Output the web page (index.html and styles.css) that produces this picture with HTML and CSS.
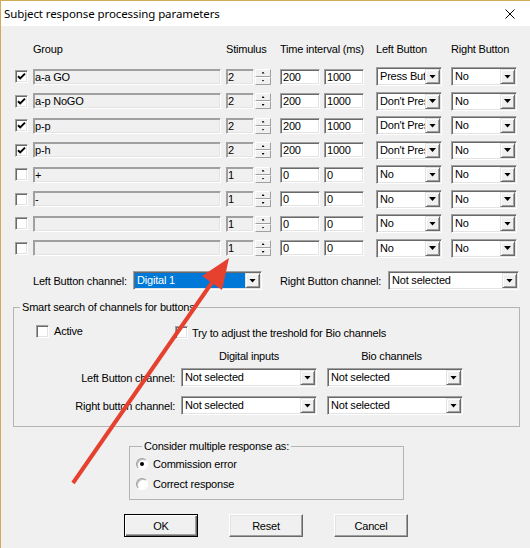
FILE: index.html
```html
<!DOCTYPE html>
<html>
<head>
<meta charset="utf-8">
<title>Subject response processing parameters</title>
<link rel="stylesheet" href="styles.css">
</head>
<body>
<div class="win">
  <div class="titlebar">
    <span class="title">Subject response processing parameters</span>
    <svg class="close" width="10" height="10" viewBox="0 0 10 10"><path d="M0.5 0.5L9.5 9.5M9.5 0.5L0.5 9.5" stroke="#000" stroke-width="1" fill="none"/></svg>
  </div>
  <div class="client">
    <div class="grid">
      <span></span><span class="hd">Group</span><span class="hd">Stimulus</span><span></span><span class="hd span2">Time interval (ms)</span><span class="hd">Left Button</span><span class="hd">Right Button</span>

      <span class="chk"><svg width="9" height="9" viewBox="0 0 9 9"><path d="M1 4.2L3.2 6.4L8 1.6" stroke="#000" stroke-width="2" fill="none"/></svg></span><span class="edit ro wg">a-a GO</span><span class="edit ro ws">2</span><span class="spin"><span class="su"></span><span class="sd"></span></span><span class="edit wt">200</span><span class="edit wt">1000</span><span class="combo cl"><span class="ct">Press Button</span><span class="cb"></span></span><span class="combo cr"><span class="ct">No</span><span class="cb"></span></span>

      <span class="chk"><svg width="9" height="9" viewBox="0 0 9 9"><path d="M1 4.2L3.2 6.4L8 1.6" stroke="#000" stroke-width="2" fill="none"/></svg></span><span class="edit ro wg">a-p NoGO</span><span class="edit ro ws">2</span><span class="spin"><span class="su"></span><span class="sd"></span></span><span class="edit wt">200</span><span class="edit wt">1000</span><span class="combo cl"><span class="ct">Don't Press</span><span class="cb"></span></span><span class="combo cr"><span class="ct">No</span><span class="cb"></span></span>

      <span class="chk"><svg width="9" height="9" viewBox="0 0 9 9"><path d="M1 4.2L3.2 6.4L8 1.6" stroke="#000" stroke-width="2" fill="none"/></svg></span><span class="edit ro wg">p-p</span><span class="edit ro ws">2</span><span class="spin"><span class="su"></span><span class="sd"></span></span><span class="edit wt">200</span><span class="edit wt">1000</span><span class="combo cl"><span class="ct">Don't Press</span><span class="cb"></span></span><span class="combo cr"><span class="ct">No</span><span class="cb"></span></span>

      <span class="chk"><svg width="9" height="9" viewBox="0 0 9 9"><path d="M1 4.2L3.2 6.4L8 1.6" stroke="#000" stroke-width="2" fill="none"/></svg></span><span class="edit ro wg">p-h</span><span class="edit ro ws">2</span><span class="spin"><span class="su"></span><span class="sd"></span></span><span class="edit wt">200</span><span class="edit wt">1000</span><span class="combo cl"><span class="ct">Don't Press</span><span class="cb"></span></span><span class="combo cr"><span class="ct">No</span><span class="cb"></span></span>

      <span class="chk"></span><span class="edit ro wg">+</span><span class="edit ro ws">1</span><span class="spin"><span class="su"></span><span class="sd"></span></span><span class="edit wt">0</span><span class="edit wt">0</span><span class="combo cl"><span class="ct">No</span><span class="cb"></span></span><span class="combo cr"><span class="ct">No</span><span class="cb"></span></span>

      <span class="chk"></span><span class="edit ro wg">-</span><span class="edit ro ws">1</span><span class="spin"><span class="su"></span><span class="sd"></span></span><span class="edit wt">0</span><span class="edit wt">0</span><span class="combo cl"><span class="ct">No</span><span class="cb"></span></span><span class="combo cr"><span class="ct">No</span><span class="cb"></span></span>

      <span class="chk"></span><span class="edit ro wg"></span><span class="edit ro ws">1</span><span class="spin"><span class="su"></span><span class="sd"></span></span><span class="edit wt">0</span><span class="edit wt">0</span><span class="combo cl"><span class="ct">No</span><span class="cb"></span></span><span class="combo cr"><span class="ct">No</span><span class="cb"></span></span>

      <span class="chk"></span><span class="edit ro wg"></span><span class="edit ro ws">1</span><span class="spin"><span class="su"></span><span class="sd"></span></span><span class="edit wt">0</span><span class="edit wt">0</span><span class="combo cl"><span class="ct">No</span><span class="cb"></span></span><span class="combo cr"><span class="ct">No</span><span class="cb"></span></span>
    </div>

    <div class="chan">
      <span>Left Button channel:</span>
      <span class="combo cw1"><span class="ct"><span class="sel">Digital 1</span></span><span class="cb"></span></span>
      <span></span>
      <span>Right Button channel:</span>
      <span class="combo cw2"><span class="ct">Not selected</span><span class="cb"></span></span>
    </div>

    <fieldset class="fs1">
      <legend>Smart search of channels for buttons</legend>
      <div class="rowa">
        <label class="opt o1"><span class="chk"></span><span>Active</span></label>
        <label class="opt o2"><span class="chk"></span><span>Try to adjust the treshold for Bio channels</span></label>
      </div>
      <div class="srow shd">
        <span></span><span class="ch1">Digital inputs</span><span class="ch2">Bio channels</span>
      </div>
      <div class="srow sr1">
        <span class="lab">Left Button channel:</span>
        <span class="combo cs"><span class="ct">Not selected</span><span class="cb"></span></span>
        <span class="combo cs"><span class="ct">Not selected</span><span class="cb"></span></span>
      </div>
      <div class="srow sr2">
        <span class="lab">Right button channel:</span>
        <span class="combo cs"><span class="ct">Not selected</span><span class="cb"></span></span>
        <span class="combo cs"><span class="ct">Not selected</span><span class="cb"></span></span>
      </div>
    </fieldset>

    <fieldset class="fs2">
      <legend>Consider multiple response as:</legend>
      <label class="radio r1"><span class="rb on"></span><span>Commission error</span></label>
      <label class="radio r2"><span class="rb"></span><span>Correct response</span></label>
    </fieldset>

    <div class="buttons">
      <span class="btn def">OK</span>
      <span class="btn">Reset</span>
      <span class="btn">Cancel</span>
    </div>
  </div>

  <svg class="arrow" width="530" height="548" viewBox="0 0 530 548">
    <line x1="73" y1="483" x2="213" y2="281" stroke="#e6402f" stroke-width="4"/>
    <polygon points="229,258 222,290 202,276" fill="#e6402f"/>
  </svg>
</div>
</body>
</html>
```

FILE: styles.css
```css
* { box-sizing: border-box; }
html, body { margin: 0; padding: 0; background: #f0f0f0; }
body {
  font-family: "Liberation Sans", Arial, sans-serif;
  font-size: 11px;
  letter-spacing: -0.2px;
  color: #000;
}
.win {
  width: 530px;
  height: 548px;
  position: relative;
  border-left: 1px solid #cfac55;
  border-top: 1px solid #cfac55;
  background: #f0f0f0;
  overflow: hidden;
}
.titlebar {
  height: 25px;
  background: #fff;
  display: flex;
  align-items: center;
  justify-content: space-between;
  padding: 0 15px 0 3px;
}
.title {
  font-family: "Noto Sans", "Open Sans", sans-serif;
  font-size: 11.5px;
  letter-spacing: -0.1px;
}
.close { display: block; }

.client { padding-top: 7.75px; }

.grid {
  display: grid;
  grid-template-columns: 18px 193px 29px 25px 44px 52px 75px 66px;
  grid-template-rows: 30.5px repeat(8, 24.5px);
  align-items: center;
  margin-left: 14px;
}
.hd { white-space: nowrap; }
.span2 { grid-column: span 2; }

.chk {
  width: 13px;
  height: 13px;
  border: 1px solid;
  border-color: #a0a0a0 #fff #fff #a0a0a0;
  box-shadow: inset 1px 1px 0 #696969, inset -1px -1px 0 #e3e3e3;
  background: #fff;
  display: flex;
  align-items: center;
  justify-content: center;
}
.chk svg { display: block; }

.edit {
  display: block;
  height: 16px;
  border: 1px solid;
  border-color: #a0a0a0 #fff #fff #a0a0a0;
  box-shadow: inset 1px 1px 0 #696969, inset -1px -1px 0 #e3e3e3;
  background: #fff;
  padding-left: 2px;
  line-height: 14px;
  white-space: nowrap;
  overflow: hidden;
}
.ro {
  background: #f0f0f0;
  border-color: #a0a0a0 #fff #fff #a0a0a0;
  box-shadow: inset 1px 1px 0 #a0a0a0, inset -1px -1px 0 #e3e3e3;
  padding-left: 1px;
}
.wg { width: 188px; }
.ws { width: 28px; }
.wt { width: 40px; }

.spin {
  width: 16px;
  height: 16px;
  display: flex;
  flex-direction: column;
}
.spin > span {
  flex: 1;
  background: #f0f0f0;
  border: 1px solid;
  border-color: #fff #a0a0a0 #a0a0a0 #fff;
  display: flex;
  align-items: center;
  justify-content: center;
}
.su::after, .sd::after {
  content: "";
  display: block;
  width: 3px;
  height: 2px;
  background: #000;
}
.su::after { clip-path: polygon(50% 0, 100% 100%, 0 100%); }
.sd::after { clip-path: polygon(0 0, 100% 0, 50% 100%); }

.combo {
  display: flex;
  height: 19px;
  border: 1px solid;
  border-color: #a0a0a0 #fff #fff #a0a0a0;
  box-shadow: inset 1px 1px 0 #696969, inset -1px -1px 0 #e3e3e3;
  background: #fff;
  padding: 1px;
}
.ct {
  flex: 1;
  min-width: 0;
  overflow: hidden;
  white-space: nowrap;
  line-height: 15px;
  padding-left: 2px;
}
.cb {
  flex: none;
  width: 15px;
  height: 15px;
  background: #f0f0f0;
  border: 1px solid;
  border-color: #e3e3e3 #696969 #696969 #e3e3e3;
  box-shadow: inset 1px 1px 0 #fff, inset -1px -1px 0 #a0a0a0;
  display: flex;
  align-items: center;
  justify-content: center;
}
.cb::after {
  content: "";
  display: block;
  width: 7px;
  height: 4px;
  background: #000;
  clip-path: polygon(0 0, 100% 0, 50% 100%);
}
.cl { width: 66px; }
.cr { width: 66px; }

.chan {
  display: grid;
  grid-template-columns: 100px 129px 18px 108px 131px;
  align-items: center;
  height: 20px;
  margin: 10.25px 0 0 32px;
  white-space: nowrap;
}
.cw1, .cw2 { width: 100%; }
.cw1 .ct { padding-left: 0; }
.sel {
  display: block;
  background: #0078d7;
  color: #fff;
  padding-left: 2px;
  height: 15px;
}

fieldset {
  margin: 0;
  padding: 0;
  border: 1px solid #b4b4b4;
  min-width: 0;
}
legend {
  padding: 0 2px;
  margin-left: 6px;
  line-height: 13px;
  white-space: nowrap;
}
.fs1 {
  margin: 10px 0 0 12px;
  width: 507px;
  padding-bottom: 11px;
}
.rowa {
  display: flex;
  align-items: center;
  height: 20px;
  margin-top: 7.5px;
  padding-left: 22px;
}
.opt { display: flex; align-items: center; white-space: nowrap; }
.o1 { width: 139px; gap: 5px; }
.o2 { gap: 4px; padding-top: 3px; }

.srow {
  display: grid;
  grid-template-columns: 167px 146px 136px;
  align-items: center;
  white-space: nowrap;
}
.shd { height: 14px; margin-top: 7.5px; }
.ch1 { width: 136px; text-align: center; }
.ch2 { text-align: center; padding-right: 7px; }
.sr1 { margin-top: 5.5px; }
.sr2 { margin-top: 9px; }
.lab { text-align: right; padding-right: 6px; }
.cs { width: 136px; }

.fs2 {
  margin: 12.5px 0 0 128px;
  width: 275px;
  padding: 0 0 6px 6px;
}
.radio {
  display: flex;
  align-items: center;
  gap: 5px;
  height: 18px;
}
.r1 { margin-top: 2.5px; }
.r2 { margin-top: 2px; }
.rb {
  width: 12px;
  height: 12px;
  border-radius: 50%;
  border: 1px solid;
  border-color: #a0a0a0 #fff #fff #a0a0a0;
  box-shadow: inset 1px 1px 0 #b9b9b9;
  background: #fff;
  display: flex;
  align-items: center;
  justify-content: center;
}
.rb.on::after {
  content: "";
  width: 4px;
  height: 4px;
  border-radius: 50%;
  background: #000;
}

.buttons {
  display: flex;
  gap: 31px;
  margin: 14px 0 0 123px;
}
.btn {
  width: 74px;
  height: 23px;
  display: flex;
  align-items: center;
  justify-content: center;
  background: #f0f0f0;
  border: 1px solid;
  border-color: #fff #696969 #696969 #fff;
  box-shadow: inset -1px -1px 0 #a0a0a0, inset 1px 1px 0 #e3e3e3;
}
.btn.def {
  border-color: #000;
  box-shadow: inset 1px 1px 0 #fff, inset -1px -1px 0 #696969, inset -2px -2px 0 #a0a0a0;
}

.arrow {
  position: absolute;
  left: -1px;
  top: -1px;
  pointer-events: none;
}
```
